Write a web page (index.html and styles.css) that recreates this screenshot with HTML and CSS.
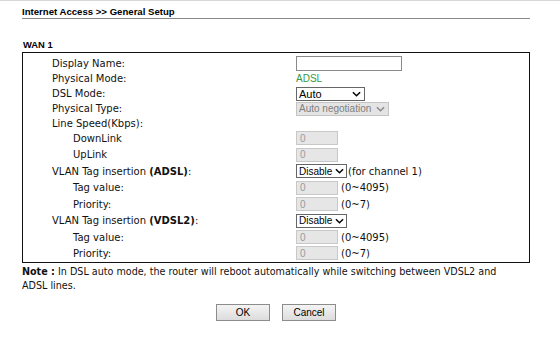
FILE: index.html
```html
<!DOCTYPE html>
<html lang="en">
<head>
    <meta charset="UTF-8">
    <title>Internet Access - General Setup</title>
    <link rel="stylesheet" href="styles.css">
</head>
<body>
    <div class="page">
        <h1 class="title">Internet Access &gt;&gt; General Setup</h1>

        <h2 class="wan">WAN 1</h2>

        <div class="frame">
            <div class="row r16">
                <div class="label">Display Name:</div>
                <div class="field"><input type="text" class="txt-name"></div>
            </div>
            <div class="row r15">
                <div class="label">Physical Mode:</div>
                <div class="field"><span class="mode">ADSL</span></div>
            </div>
            <div class="row r15">
                <div class="label">DSL Mode:</div>
                <div class="field">
                    <span class="sel sel-auto">Auto<svg viewBox="0 0 10 6"><path d="M1 1l4 4 4-4"/></svg></span>
                </div>
            </div>
            <div class="row r15">
                <div class="label">Physical Type:</div>
                <div class="field">
                    <span class="sel sel-neg">Auto negotiation<svg viewBox="0 0 10 6"><path d="M1 1l4 4 4-4"/></svg></span>
                </div>
            </div>
            <div class="row r14">
                <div class="label">Line Speed(Kbps):</div>
                <div class="field"></div>
            </div>
            <div class="row r16">
                <div class="label sub">DownLink</div>
                <div class="field"><input type="text" class="num" value="0" disabled></div>
            </div>
            <div class="row r17">
                <div class="label sub">UpLink</div>
                <div class="field"><input type="text" class="num" value="0" disabled></div>
            </div>
            <div class="row r16">
                <div class="label">VLAN Tag insertion <b>(ADSL)</b>:</div>
                <div class="field">
                    <span class="sel sel-dis">Disable<svg viewBox="0 0 10 6"><path d="M1 1l4 4 4-4"/></svg></span><span class="hint tight">(for channel 1)</span>
                </div>
            </div>
            <div class="row r17">
                <div class="label sub">Tag value:</div>
                <div class="field"><input type="text" class="num" value="0" disabled><span class="hint">(0~4095)</span></div>
            </div>
            <div class="row r16">
                <div class="label sub">Priority:</div>
                <div class="field"><input type="text" class="num" value="0" disabled><span class="hint">(0~7)</span></div>
            </div>
            <div class="row r17">
                <div class="label">VLAN Tag insertion <b>(VDSL2)</b>:</div>
                <div class="field">
                    <span class="sel sel-dis">Disable<svg viewBox="0 0 10 6"><path d="M1 1l4 4 4-4"/></svg></span>
                </div>
            </div>
            <div class="row r16">
                <div class="label sub">Tag value:</div>
                <div class="field"><input type="text" class="num" value="0" disabled><span class="hint">(0~4095)</span></div>
            </div>
            <div class="row r16">
                <div class="label sub">Priority:</div>
                <div class="field"><input type="text" class="num" value="0" disabled><span class="hint">(0~7)</span></div>
            </div>
        </div>

        <p class="note"><b>Note :</b> In DSL auto mode, the router will reboot automatically while switching between VDSL2 and ADSL lines.</p>

        <div class="buttons">
            <button class="btn">OK</button>
            <button class="btn">Cancel</button>
        </div>
    </div>
</body>
</html>
```

FILE: styles.css
```css
* {
    margin: 0;
    padding: 0;
    box-sizing: border-box;
}

body {
    background: #fff;
    color: #111;
    font-family: "DejaVu Sans", Verdana, sans-serif;
    font-size: 10px;
    border-top: 1px solid #d8d8d8;
}

.page {
    width: 508px;
    margin-left: 22px;
}

/* Cabeçalho */
.title {
    font-family: "Liberation Sans", Arial, sans-serif;
    font-size: 9.6px;
    font-weight: bold;
    color: #000;
    padding-top: 5px;
    height: 18px;
    border-bottom: 1px solid #888;
}

.wan {
    font-family: "Liberation Sans", Arial, sans-serif;
    font-size: 9.4px;
    font-weight: bold;
    color: #000;
    margin-top: 20px;
    height: 13px;
    padding-left: 1px;
}

/* Quadro do formulário */
.frame {
    border: 1px solid #111;
    padding: 2px 0 1px;
}

.row {
    display: flex;
    align-items: center;
}

.r14 { height: 14px; }
.r15 { height: 15px; }
.r16 { height: 16px; }
.r17 { height: 17px; }

.label {
    width: 273px;
    padding-left: 29px;
    white-space: nowrap;
}

.label.sub {
    padding-left: 50px;
}

.field {
    display: flex;
    align-items: center;
    font-family: "Liberation Sans", Arial, sans-serif;
}

.txt-name {
    width: 106px;
    height: 15px;
    border: 1px solid #8a8a8a;
    background: #fff;
}

.mode {
    color: #3a9a3a;
    font-size: 10px;
}

.sel {
    display: flex;
    align-items: center;
    justify-content: space-between;
    height: 14px;
    padding: 0 3px 0 2px;
    border: 1px solid #666;
    background: #fff;
    color: #000;
    font-size: 11px;
    white-space: nowrap;
}

.sel svg {
    width: 9px;
    height: 6px;
    fill: none;
    stroke: #000;
    stroke-width: 1.6;
    flex-shrink: 0;
}

.sel-auto {
    width: 69px;
}

.sel-neg {
    width: 93px;
    font-size: 10px;
    background: #e4e4e4;
    border-color: #c4c4c4;
    color: #808080;
}

.sel-neg svg {
    stroke: #8a8a8a;
}

.sel-dis {
    width: 51px;
    font-size: 10px;
    padding-right: 2px;
}

.num {
    width: 42px;
    height: 14px;
    border: 1px solid #c8c8c8;
    background: #e6e6e6;
    color: #9a9a9a;
    font-family: "Liberation Sans", Arial, sans-serif;
    font-size: 10px;
    padding-left: 3px;
}

.hint {
    font-family: "DejaVu Sans", Verdana, sans-serif;
    font-size: 10px;
    margin-left: 3px;
}

.hint.tight {
    margin-left: 1px;
}

/* Nota e botões */
.note {
    margin-top: 2px;
    padding-right: 16px;
    font-size: 9.6px;
    line-height: 14px;
    color: #111;
}

.buttons {
    display: flex;
    justify-content: center;
    gap: 12px;
    margin-top: 11px;
}

.btn {
    width: 54px;
    height: 17px;
    font-family: "Liberation Sans", Arial, sans-serif;
    font-size: 10px;
    color: #000;
    border: 1px solid #8c8c8c;
    background: linear-gradient(#f4f4f4, #dcdcdc);
}
```
